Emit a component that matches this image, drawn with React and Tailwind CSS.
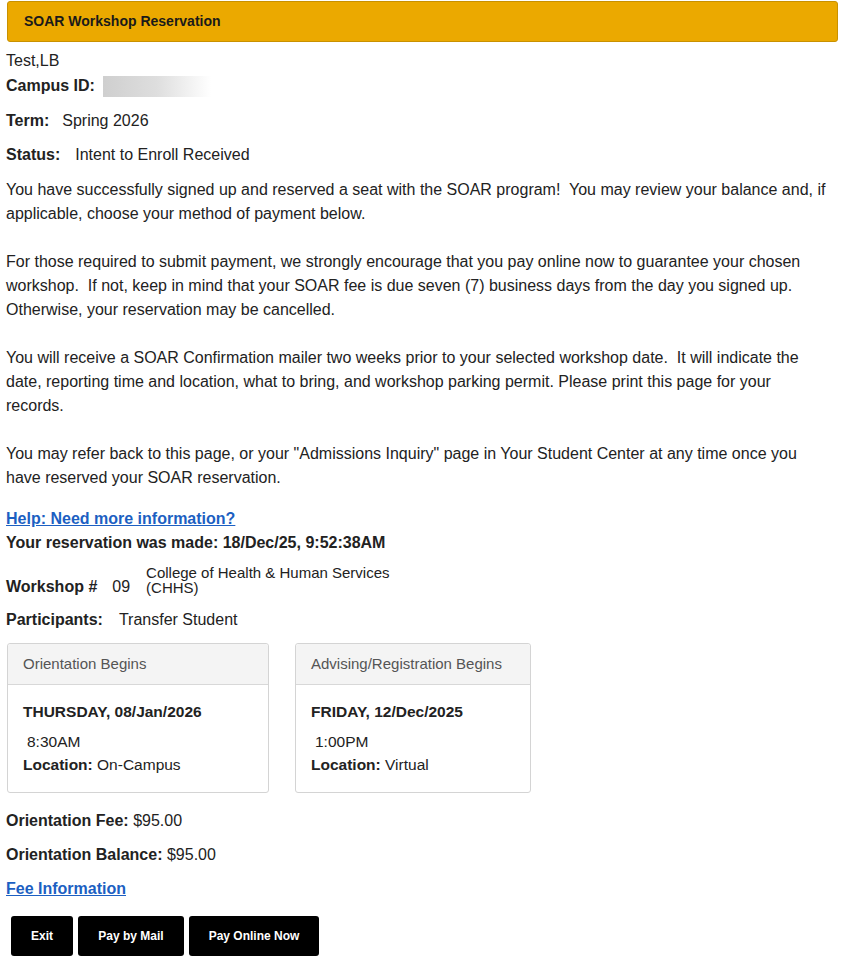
import React from "react";

const NB = "\u00a0";

function Card({ title, date, time, location, width }) {
  return (
    <div className={`border border-[#d4d4d4] rounded-[3px] bg-white ${width} h-[150px] flex flex-col`}>
      <div className="h-[41px] bg-[#f4f4f4] border-b border-[#d8d8d8] flex items-center pl-[15px] text-[15px] text-[#555] rounded-t-[3px]">
        {title}
      </div>
      <div className="pl-[15px] pt-[17px] text-[15.5px] text-[#222]">
        <div className="font-bold h-[20px] leading-[20px]">{date}</div>
        <div className="mt-[10px] h-[20px] leading-[20px] pl-[4px]">{time}</div>
        <div className="mt-[2px] h-[22px] leading-[22px]">
          <span className="font-bold">Location:</span> {location}
        </div>
      </div>
    </div>
  );
}

function Btn({ children, w }) {
  return (
    <button className={`bg-black text-white font-bold text-[12px] h-[40px] rounded-[3px] ${w}`}>
      {children}
    </button>
  );
}

export default function App() {
  return (
    <div
      className="bg-white w-[848px] h-[963px] text-[#222] text-[16px] overflow-hidden"
      style={{ fontFamily: '"Liberation Sans", Arial, sans-serif' }}
    >
      <div className="pt-[1px] pl-[7px] pr-[10px]">
        <div className="h-[41px] bg-[#eba900] border border-[#c99100] rounded-[3px] flex items-center pl-[16px] font-bold text-[14px] text-[#1a1a1a]">
          SOAR Workshop Reservation
        </div>
      </div>

      <div className="pl-[6px] pr-[18px]">
        <div className="h-[24px] leading-[24px] mt-[7px]">Test,LB</div>
        <div className="h-[26px] flex items-center">
          <span className="font-bold">Campus ID:</span>
          <span className="ml-[8px] inline-block w-[108px] h-[21px] bg-gradient-to-r from-[#cfcfcf] via-[#dedede] to-[#ffffff]"></span>
        </div>
        <div className="h-[24px] leading-[24px] mt-[10px] flex">
          <span className="font-bold">Term:</span>
          <span className="ml-[13px]">Spring 2026</span>
        </div>
        <div className="h-[24px] leading-[24px] mt-[10px] flex">
          <span className="font-bold">Status:</span>
          <span className="ml-[15px]">Intent to Enroll Received</span>
        </div>

        <div className="mt-[11px] leading-[24px]">
          <p>
            You have successfully signed up and reserved a seat with the SOAR program!{NB} You may review your balance and, if applicable, choose your method of payment below.
          </p>
          <br />
          <p>
            For those required to submit payment, we strongly encourage that you pay online now to guarantee your chosen workshop.{NB} If not, keep in mind that your SOAR fee is due seven (7) business days from the day you signed up. Otherwise, your reservation may be cancelled.
          </p>
          <br />
          <p>
            You will receive a SOAR Confirmation mailer two weeks prior to your selected workshop date.{NB} It will indicate the date, reporting time and location, what to bring, and workshop parking permit. Please print this page for your records.
          </p>
          <br />
          <p>
            You may refer back to this page, or your "Admissions Inquiry" page in Your Student Center at any time once you have reserved your SOAR reservation.
          </p>
        </div>

        <div className="mt-[17px] h-[24px] leading-[24px]">
          <a href="#" className="font-bold text-[#1c5fc2] underline">
            Help: Need more information?
          </a>
        </div>
        <div className="h-[24px] leading-[24px] font-bold">
          Your reservation was made: 18/Dec/25, 9:52:38AM
        </div>

        <div className="mt-[8px] flex items-end h-[36px]">
          <span className="font-bold leading-[24px]">Workshop #</span>
          <span className="ml-[15px] leading-[24px]">09</span>
          <span className="ml-[16px] text-[15px] leading-[15px] w-[270px] pb-[4px]">
            College of Health &amp; Human Services (CHHS)
          </span>
        </div>

        <div className="mt-[9px] h-[24px] leading-[24px] flex">
          <span className="font-bold">Participants:</span>
          <span className="ml-[16px]">Transfer Student</span>
        </div>

        <div className="mt-[11px] flex gap-[26px] pl-[1px]">
          <Card
            width="w-[262px]"
            title="Orientation Begins"
            date="THURSDAY, 08/Jan/2026"
            time="8:30AM"
            location="On-Campus"
          />
          <Card
            width="w-[236px]"
            title="Advising/Registration Begins"
            date="FRIDAY, 12/Dec/2025"
            time="1:00PM"
            location="Virtual"
          />
        </div>

        <div className="mt-[16px] h-[24px] leading-[24px]">
          <span className="font-bold">Orientation Fee:</span> $95.00
        </div>
        <div className="mt-[10px] h-[24px] leading-[24px]">
          <span className="font-bold">Orientation Balance:</span> $95.00
        </div>
        <div className="mt-[10px] h-[24px] leading-[24px]">
          <a href="#" className="font-bold text-[#1c5fc2] underline">
            Fee Information
          </a>
        </div>

        <div className="mt-[15px] flex gap-[5px] pl-[5px]">
          <Btn w="w-[62px]">Exit</Btn>
          <Btn w="w-[106px]">Pay by Mail</Btn>
          <Btn w="w-[130px]">Pay Online Now</Btn>
        </div>
      </div>
    </div>
  );
}
